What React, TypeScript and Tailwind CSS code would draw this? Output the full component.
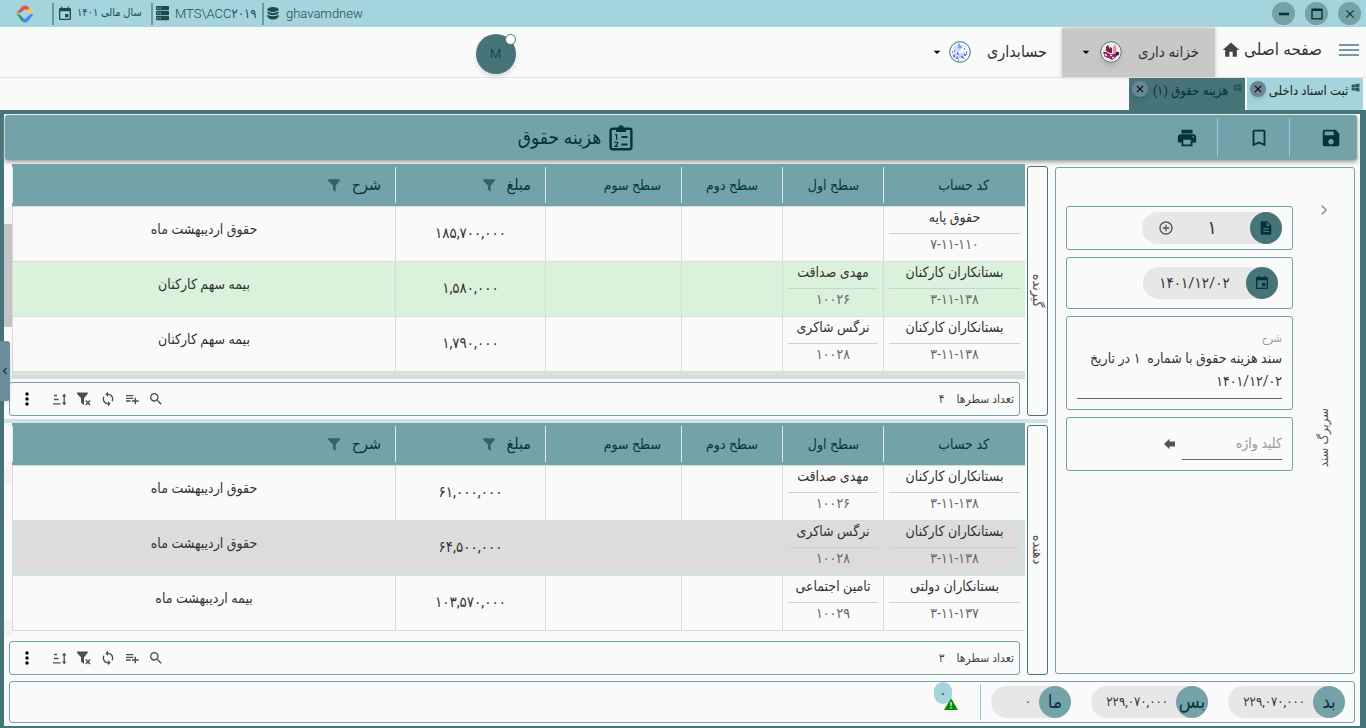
import React, { useState } from 'react';
import {
  MdAddCircleOutline,
  MdArrowDropDown,
  MdBookmarkBorder,
  MdChevronRight,
  MdClose,
  MdDescription,
  MdEvent,
  MdHome,
  MdMoreVert,
  MdPlaylistAdd,
  MdPrint,
  MdSave,
  MdSearch,
  MdSync,
} from 'react-icons/md';
import { FaWindows } from 'react-icons/fa';

interface Row {
  account?: [string, string];
  level1?: [string, string];
  amount: string;
  desc: string;
  tone?: 'green' | 'selected';
}

const receiverRows: Row[] = [
  { account: ['حقوق پایه', '۷-۱۱-۱۱۰'], amount: '۱۸۵,۷۰۰,۰۰۰', desc: 'حقوق اردیبهشت ماه' },
  { account: ['بستانکاران کارکنان', '۳-۱۱-۱۳۸'], level1: ['مهدی صداقت', '۱۰۰۲۶'], amount: '۱,۵۸۰,۰۰۰', desc: 'بیمه سهم کارکنان', tone: 'green' },
  { account: ['بستانکاران کارکنان', '۳-۱۱-۱۳۸'], level1: ['نرگس شاکری', '۱۰۰۲۸'], amount: '۱,۷۹۰,۰۰۰', desc: 'بیمه سهم کارکنان' },
  { amount: '', desc: '', tone: 'selected' },
];

const payerRows: Row[] = [
  { account: ['بستانکاران کارکنان', '۳-۱۱-۱۳۸'], level1: ['مهدی صداقت', '۱۰۰۲۶'], amount: '۶۱,۰۰۰,۰۰۰', desc: 'حقوق اردیبهشت ماه' },
  { account: ['بستانکاران کارکنان', '۳-۱۱-۱۳۸'], level1: ['نرگس شاکری', '۱۰۰۲۸'], amount: '۶۴,۵۰۰,۰۰۰', desc: 'حقوق اردیبهشت ماه', tone: 'selected' },
  { account: ['بستانکاران دولتی', '۳-۱۱-۱۳۷'], level1: ['تامین اجتماعی', '۱۰۰۲۹'], amount: '۱۰۳,۵۷۰,۰۰۰', desc: 'بیمه اردیبهشت ماه' },
];

const totals = [
  { label: 'بد', value: '۲۲۹,۰۷۰,۰۰۰', width: 'w-[117px]' },
  { label: 'بس', value: '۲۲۹,۰۷۰,۰۰۰', width: 'w-[117px]' },
  { label: 'ما', value: '۰', width: 'w-20' },
];

/* ---------- icons ---------- */

function Logo() {
  return (
    <svg viewBox="0 0 18 18" className="w-[18px] h-[18px]">
      <path d="M0.5 8 6 1.5Q9-0.5 12 1.5L14 4 10.5 5.5 9 4.2 4 8Z" fill="#e2574c" />
      <path d="M14 3.5 17.5 8 14.5 9 10 5Z" fill="#f9c846" />
      <path d="M0.5 9 3.5 9.5 8 14 6 16.5Z" fill="#2e9e5b" />
      <path d="M17.5 9 12 16.5Q9 18.5 6 16.2L7.5 13 9 14 14.5 9Z" fill="#4a86f0" />
    </svg>
  );
}

function ServerIcon() {
  return (
    <svg viewBox="0 0 13 15" className="w-[13px] h-[15px]">
      {[0, 5, 10].map((y) => (
        <g key={y}>
          <rect x="0" y={y} width="13" height="4.2" rx="0.8" fill="#1f4a50" />
          <rect x="1.2" y={y + 1.5} width="1.2" height="1.2" fill="#a4d4dc" />
          <rect x="3.6" y={y + 1.5} width="1.2" height="1.2" fill="#a4d4dc" />
        </g>
      ))}
    </svg>
  );
}

function DatabaseIcon() {
  return (
    <svg viewBox="0 0 12 13" className="w-3 h-[13px]" fill="#1f4a50">
      <ellipse cx="6" cy="2.5" rx="5.6" ry="2.4" />
      <path d="M.4 4.2Q2 6 6 6t5.6-1.8V6Q10 8.2 6 8.2T.4 6Z" />
      <path d="M.4 7.6Q2 9.2 6 9.2t5.6-1.6v2.2Q10 12.6 6 12.6T.4 9.8Z" />
    </svg>
  );
}

function ClipboardIcon() {
  return (
    <svg viewBox="0 0 24 26" className="w-6 h-[26px]" fill="none" stroke="#04333a" strokeWidth="2.4">
      <rect x="1.6" y="3.8" width="20.8" height="20.4" rx="2" />
      <path d="M7 5h10" strokeWidth="4" />
      <circle cx="12" cy="3" r="1.7" strokeWidth="2" />
      <path d="M12.5 12h6M12.5 19.5h6" strokeWidth="2" />
      <path d="M6 9.6h1.6v5.2M5.500 17.4h3v1.4l-2.6 2.6h3" strokeWidth="1.200" />
    </svg>
  );
}

function FilterIcon() {
  return (
    <svg viewBox="0 0 12 13" className="w-3 h-[13px]" fill="#356167">
      <path d="M.2.3h11.6v1.5L7.7 6.6v6.1L4.9 11V6.6L.2 1.8Z" />
    </svg>
  );
}

function SortIcon() {
  return (
    <svg viewBox="0 0 14 13" className="w-3.5 h-[13px]" fill="none" stroke="#4d4d4d" strokeWidth="1.3">
      <path d="M1 2.5h3M1 6.5h4.5M0 10.8h7.5M11.2 2v9" />
      <path d="M9 3.4 11.2.6l2.2 2.8ZM9 9.6l2.2 2.8 2.2-2.8Z" fill="#4d4d4d" stroke="none" />
    </svg>
  );
}

function FilterRemoveIcon() {
  return (
    <svg viewBox="0 0 14 14" className="w-3.5 h-3.5" fill="#4d4d4d">
      <path d="M0 .5h10.8v1.2L7 6.2v6.9L4 10.6V6.2L0 1.7Z" />
      <path d="m8.8 8.6 4.2 4.4M13 8.6 8.8 13" stroke="#4d4d4d" strokeWidth="1.4" />
    </svg>
  );
}

function AccountingIcon() {
  return (
    <svg viewBox="0 0 22 22" className="w-[22px] h-[22px]">
      <circle cx="11" cy="11" r="10.3" fill="#f4f7ff" stroke="#467479" strokeWidth="1" />
      <circle cx="8" cy="8" r="3.4" fill="#cfdcf8" />
      <path d="M10 2.5v5M12 4.5v3" stroke="#5b87ea" strokeWidth="1.4" />
      <path d="M3 13q4-3 7 0l6-2v4l-5 2H5Z" fill="#c3d3f8" />
      <path d="M4 15h2m1 2h2m3-1h2m1-2h2M15 8h1m1 3h1M5 10h1M9 13h1" stroke="#2f62d4" strokeWidth="1.3" />
      <path d="M3 11h1m4 1h1m5 5h1m2-4h1M9 19h1" stroke="#16233f" strokeWidth="1" />
    </svg>
  );
}

function TreasuryIcon() {
  return (
    <svg viewBox="0 0 22 22" className="w-[22px] h-[22px] rounded-full shadow-md">
      <circle cx="11" cy="11" r="10.3" fill="#eef1f2" stroke="#467479" strokeWidth="1" />
      <path d="M6 10V6l2-2 2 4v4ZM10 12V6l2 1v5Z" fill="#7a1f48" />
      <path d="M13 12V6l2-3 1.5 4v5Z" fill="#ef8f97" />
      <path d="M3 11q3-1 5 1t5 1 4-1l-1 4-4 3-3-2-4-1Z" fill="#a3175b" />
      <path d="m5 13 2 2m3 0 2-1m0 3 2-1" stroke="#fff" strokeWidth="1.2" />
      <path d="M16 11h3v3l-3 1Z" fill="#1d3038" />
    </svg>
  );
}

/* ---------- pieces ---------- */

function TitleBar() {
  const roundBtn = 'w-[23px] h-[23px] rounded-full bg-[#73a2a9] flex items-center justify-center text-[#06333a]';
  return (
    <header dir="ltr" className="h-[27px] shrink-0 bg-[#a4d4dc] flex items-center justify-between pl-4 pr-[5px] text-[13px] font-light text-[#1f4a50]">
      <div className="flex items-center">
        <Logo />
        <div className="ml-[18px] h-[22px] border-l-2 border-[#6a9aa1] pl-[3px] w-[99px] flex items-center gap-1">
          <MdEvent className="w-4 h-4 shrink-0" />
          <span dir="rtl" className="text-[11px] whitespace-nowrap">سال مالی ۱۴۰۱</span>
        </div>
        <div className="h-[22px] border-l-2 border-[#6a9aa1] pl-[3px] w-[111px] flex items-center gap-1.5">
          <ServerIcon />
          <span className="whitespace-nowrap">MTS\ACC۲۰۱۹</span>
        </div>
        <div className="h-[22px] border-l-2 border-[#6a9aa1] pl-[3px] flex items-center gap-[7px]">
          <DatabaseIcon />
          <span>ghavamdnew</span>
        </div>
      </div>
      <div className="flex items-center gap-2.5">
        <button aria-label="کوچک کردن" className={roundBtn}>
          <svg viewBox="0 0 12 12" className="w-3 h-3"><path d="M1 6h10" stroke="currentColor" strokeWidth="2.6" /></svg>
        </button>
        <button aria-label="بزرگ کردن" className={roundBtn}>
          <svg viewBox="0 0 12 12" className="w-3 h-3" fill="none" stroke="currentColor">
            <path d="M1 1.8h10" strokeWidth="2.4" />
            <rect x="1" y="1.5" width="10" height="9.3" strokeWidth="1.4" />
          </svg>
        </button>
        <button aria-label="بستن" className={roundBtn}>
          <MdClose className="w-3.5 h-3.5" />
        </button>
      </div>
    </header>
  );
}

function NavBar() {
  return (
    <nav className="h-[51px] shrink-0 border-b border-[#e4e4e4] flex items-center pr-[7px] text-[15px] text-[#333]">
      <button aria-label="منو" className="w-5 flex flex-col gap-[3px] pb-1">
        <span className="h-0.5 bg-[#7597a5]" />
        <span className="h-0.5 bg-[#7597a5]" />
        <span className="h-0.5 bg-[#7597a5]" />
      </button>
      <a href="#" className="mr-[17px] flex items-center justify-between w-[101px] pb-1 text-[17px] whitespace-nowrap">
        صفحه اصلی
        <MdHome className="w-5 h-5 text-[#444] shrink-0" />
      </a>
      <button className="mr-1.5 w-[153px] h-[49px] bg-[#c8c8c8] shadow-[0_0_4px_#c8c8c8] flex items-center pr-4">
        <span className="w-[61px] whitespace-nowrap text-right">خزانه داری</span>
        <span className="mr-4"><TreasuryIcon /></span>
        <MdArrowDropDown className="mr-1.5 w-4 h-4 text-black" />
      </button>
      <button className="mr-[15px] h-[49px] flex items-center">
        <span className="w-[60px] whitespace-nowrap text-right text-base">حسابداری</span>
        <span className="mr-4"><AccountingIcon /></span>
        <MdArrowDropDown className="mr-1 w-4 h-4 text-black" />
      </button>
      <button className="relative mr-auto ml-[35%] mt-1 w-10 h-10 rounded-full bg-[#467479] shadow-md text-[#06333a] text-[13px] font-light">
        M
        <span className="absolute top-0 right-0 w-[11px] h-[11px] rounded-full bg-white border border-[#467479]" />
      </button>
    </nav>
  );
}

function Tab({ title, active }: { title: string; active?: boolean }) {
  return (
    <div className={`w-[116px] h-8 flex items-start pt-[3px] px-[3px] text-[13px] ${active ? 'bg-[#467479] text-[#0d2f35]' : 'bg-[#a4d4dc] text-[#222]'}`}>
      <FaWindows className="w-[9px] h-[9px] mt-0.5 text-[#2c595f] shrink-0" />
      <a href="#" className="flex-1 text-center whitespace-nowrap leading-5">{title}</a>
      <button aria-label={`بستن ${title}`} className="w-4 h-4 rounded-full bg-[#6b8797] shadow-md text-black flex items-center justify-center shrink-0">
        <MdClose className="w-3 h-3" />
      </button>
    </div>
  );
}

function Toolbar() {
  const btn = 'h-[39px] flex items-center pl-[30px]';
  return (
    <div className="h-[45px] ml-px mr-[3px] shrink-0 rounded-[3px] bg-[#73a2a9] shadow-[0_2px_4px_#999] flex items-center text-[#04333a]">
      <button aria-label="ذخیره" className={`${btn} pr-[15px]`}>
        <MdSave className="w-[22px] h-[22px]" />
      </button>
      <div className="w-px h-[39px] bg-[#87ceeb]" />
      <button aria-label="نشانه" className={`${btn} pr-[19px]`}>
        <MdBookmarkBorder className="w-[22px] h-[22px]" />
      </button>
      <div className="w-px h-[39px] bg-[#87ceeb]" />
      <button aria-label="چاپ" className={`${btn} pr-[19px]`}>
        <MdPrint className="w-[22px] h-[22px]" />
      </button>
      <h1 className="flex-1 flex items-center justify-center gap-2 text-[19px] leading-6">
        <ClipboardIcon />
        هزینه حقوق
      </h1>
    </div>
  );
}

function TwoLine({ value }: { value?: [string, string] }) {
  if (!value) return null;
  return (
    <div className="mx-[5px]">
      <div className="h-[27px] leading-5 border-b border-[#d0d0d0] whitespace-nowrap flex justify-center">{value[0]}</div>
      <div className="h-[27px] leading-5 text-[#666]">{value[1]}</div>
    </div>
  );
}

const columns = [
  { title: 'کد حساب', pad: 'pr-9', width: 'w-[142px]' },
  { title: 'سطح اول', pad: 'pr-6', width: 'w-[101px]' },
  { title: 'سطح دوم', pad: 'pr-6', width: 'w-[101px]' },
  { title: 'سطح سوم', pad: 'pr-5', width: 'w-[136px]' },
  { title: 'مبلغ', pad: 'pr-3.5', width: 'w-[150px]', filter: true },
  { title: 'شرح', pad: 'pr-3.5', width: '', filter: true },
];

const toneClass = {
  green: 'bg-[#daf2dc]',
  selected: 'bg-[#dcdcdc] outline outline-1 -outline-offset-2 outline-[#c9efcf]',
};

function Grid({ rows, count, side, scroll }: { rows: Row[]; count: string; side: string; scroll?: boolean }) {
  const cell = 'h-[55px] p-0 border-l border-b border-[#dadada]';
  const tool = 'w-6 flex justify-center';
  return (
    <section className="flex-1 min-h-0 flex gap-0.5">
      <div className="w-[21px] mt-0.5 mb-[3px] rounded-[3px] border border-[#467479] flex items-center justify-center text-sm text-[#555]">
        <span className="[writing-mode:vertical-rl] whitespace-nowrap">{side}</span>
      </div>
      <div className="flex-1 min-w-0 flex flex-col">
        <div className="flex-1 min-h-0 flex overflow-hidden">
          <div className="flex-1 min-w-0">
            <table className="w-full table-fixed border-separate border-spacing-0 text-center text-sm text-[#333]">
              <thead>
                <tr>
                  {columns.map((c) => (
                    <th key={c.title} className={`h-[43px] p-0 bg-[#73a2a9] border-b border-[#dadada] font-normal text-[#0e3439] ${c.width}`}>
                      <div className={`h-9 border-l border-[#dfe8ea] flex items-center ${c.filter ? 'gap-3 text-base' : ''} ${c.pad}`}>
                        {c.title}
                        {c.filter && <FilterIcon />}
                      </div>
                    </th>
                  ))}
                </tr>
              </thead>
              <tbody>
                {rows.map((r, i) => (
                  <tr key={i} className={r.tone ? toneClass[r.tone] : ''}>
                    <td className={cell}><TwoLine value={r.account} /></td>
                    <td className={cell}><TwoLine value={r.level1} /></td>
                    <td className={cell} />
                    <td className={cell} />
                    <td className={`${cell} text-[15px]`}>{r.amount}</td>
                    <td className={`${cell} pb-2.5`}>{r.desc}</td>
                  </tr>
                ))}
              </tbody>
            </table>
          </div>
          {/* scroll track */}
          <div className="w-2 mt-[43px] flex flex-col">
            <div className="h-[17px] bg-[#f3f3f3]" />
            {scroll && <div className="h-[103px] bg-[#c4c4c4]" />}
            <div className="flex-1" />
            <div className="h-[17px] bg-[#f3f3f3]" />
          </div>
        </div>
        <div className="mt-[3px] mb-[3px] mr-[5px] ml-[5px] h-[34px] shrink-0 rounded-[3px] border border-[#73a2a9] flex items-center pr-[5px] text-xs text-[#444]">
          <span>تعداد سطرها</span>
          <span className="mr-3">{count}</span>
          <div className="mr-auto flex items-center text-[#4d4d4d]">
            <button aria-label="جستجو" className={tool}><MdSearch className="w-4 h-4" /></button>
            <button aria-label="افزودن سطر" className={tool}><MdPlaylistAdd className="w-4 h-4" /></button>
            <button aria-label="بازخوانی" className={tool}><MdSync className="w-4 h-4" /></button>
            <button aria-label="حذف فیلتر" className={tool}><FilterRemoveIcon /></button>
            <button aria-label="مرتب سازی" className={`${tool} ml-1`}><SortIcon /></button>
            <button aria-label="بیشتر" className="w-[34px] flex justify-center"><MdMoreVert className="w-5 h-5 text-black" /></button>
          </div>
        </div>
      </div>
    </section>
  );
}

function HeaderPanel() {
  const [number, setNumber] = useState('۱');
  const [date, setDate] = useState('۱۴۰۱/۱۲/۰۲');
  const [note, setNote] = useState('سند هزینه حقوق با شماره  ۱ در تاریخ ۱۴۰۱/۱۲/۰۲');
  const [keyword, setKeyword] = useState('');
  const card = 'rounded-[3px] border border-[#73a2a9]';
  const round = 'w-8 h-8 rounded-full bg-[#467479] text-[#04333a] flex items-center justify-center shrink-0';

  return (
    <aside className="w-[300px] mt-[3px] mb-1 shrink-0 rounded-[3px] border border-[#73a2a9] flex">
      <div className="w-[61px] flex flex-col items-center pt-8">
        <button aria-label="جمع کردن"><MdChevronRight className="w-5 h-5 text-[#999]" /></button>
        <span className="[writing-mode:vertical-rl] rotate-180 mt-[188px] text-[13px] text-[#555] whitespace-nowrap">سربرگ سند</span>
      </div>
      <div className="flex-1 pt-[38px] pl-2.5 flex flex-col gap-[7px]">
        <div className={`${card} h-11 flex items-center pr-2.5`}>
          <div className="w-[140px] h-8 rounded-full bg-[#e7e7e7] flex items-center">
            <span className={round}><MdDescription className="w-4 h-4" /></span>
            <input aria-label="شماره سند" value={number} onChange={(e) => setNumber(e.target.value)} className="flex-1 min-w-0 text-center text-[19px] text-[#333] outline-none" />
            <button aria-label="سند جدید" className="ml-4"><MdAddCircleOutline className="w-4 h-4 text-[#555]" /></button>
          </div>
        </div>
        <div className={`${card} h-[52px] flex items-center pr-3.5`}>
          <div className="w-[135px] h-8 rounded-full bg-[#e7e7e7] flex items-center">
            <span className={round}><MdEvent className="w-4 h-4" /></span>
            <input aria-label="تاریخ سند" value={date} onChange={(e) => setDate(e.target.value)} className="flex-1 min-w-0 text-center text-[15px] text-[#333] outline-none" />
          </div>
        </div>
        <div className={`${card} h-[94px] px-2.5 pt-3.5`}>
          <label htmlFor="note" className="block text-[11px] leading-4 text-[#999]">شرح</label>
          <textarea id="note" rows={2} value={note} onChange={(e) => setNote(e.target.value)} className="block w-full h-[52px] resize-none overflow-hidden border-b border-[#666] text-sm leading-[23px] text-[#333] outline-none" />
        </div>
        <div className={`${card} h-[54px] pr-2.5 pt-2 flex items-start`}>
          <input aria-label="کلید واژه" placeholder="کلید واژه" value={keyword} onChange={(e) => setKeyword(e.target.value)} className="w-[100px] h-[34px] border-b border-[#666] text-sm placeholder:text-[#999] outline-none" />
          <button aria-label="افزودن کلید واژه" className="mr-1.5 mt-3">
            <svg viewBox="0 0 12 12" className="w-3 h-3" fill="#555"><path d="M0 6 5.5.8v2.7H11v5H5.5v2.7Z" /></svg>
          </button>
        </div>
      </div>
    </aside>
  );
}

function TotalsBar() {
  return (
    <footer className="mt-[3px] mb-[3px] ml-[5px] mr-[5px] h-[42px] shrink-0 rounded-[3px] border border-[#73a2a9] flex items-center pr-[9px] text-[#333]">
      <div className="flex items-center gap-5">
        {totals.map((t) => (
          <div key={t.label} className={`${t.width} h-8 rounded-full bg-[#e7e7e7] flex items-center`}>
            <span className="w-8 h-8 rounded-full bg-[#73a2a9] text-[#0e3439] text-[19px] flex items-center justify-center shrink-0">{t.label}</span>
            <span className="flex-1 pr-2 text-[13px] whitespace-nowrap">{t.value}</span>
          </div>
        ))}
      </div>
      <div className="mr-2.5 h-9 w-px bg-[#87ceeb]" />
      <div className="relative mr-[22px] mt-1">
        <svg viewBox="0 0 14 12" className="w-3.5 h-3">
          <path d="M7 0 14 12H0Z" fill="#0a8a0a" />
          <path d="M7 4v4M7 9v1.5" stroke="#fff" strokeWidth="1.2" />
        </svg>
        <span className="absolute -top-4 -left-2.5 w-[18px] h-[22px] rounded-full bg-[#a4d4dc] text-[#0e3439] text-sm flex items-center justify-center">۰</span>
      </div>
    </footer>
  );
}

export default function App() {
  return (
    <div dir="rtl" className="relative h-screen min-h-[640px] flex flex-col bg-[#fafafa] font-['Roboto','DejaVu_Sans_Condensed','DejaVu_Sans',sans-serif]">
      <TitleBar />
      <NavBar />
      <div className="h-8 shrink-0 flex gap-0.5 pr-[3px]">
        <Tab title="ثبت اسناد داخلی" />
        <Tab title="هزینه حقوق (۱)" active />
      </div>
      <div className="flex-1 min-h-0 border-t-4 border-l-4 border-r-[6px] border-b-2 border-[#467479] pt-px flex flex-col">
        <Toolbar />
        <main className="flex-1 min-h-0 mt-1 pr-[5px] flex gap-[7px]">
          <HeaderPanel />
          <div className="flex-1 min-w-0 flex flex-col">
            <Grid rows={receiverRows} count="۴" side="گیرنده" scroll />
            <div className="h-1 shrink-0 bg-[#c9e5e9]" />
            <Grid rows={payerRows} count="۳" side="دهنده" />
          </div>
        </main>
        <TotalsBar />
      </div>
      {/* drawer handle on the window edge */}
      <button aria-label="باز کردن کشو" className="absolute left-0 top-[341px] w-2.5 h-[60px] rounded-r-[3px] bg-[#6e8d9b] shadow-md flex items-center justify-center text-[#06333a]">
        <MdChevronRight className="w-3.5 h-3.5 rotate-180 shrink-0" />
      </button>
    </div>
  );
}
